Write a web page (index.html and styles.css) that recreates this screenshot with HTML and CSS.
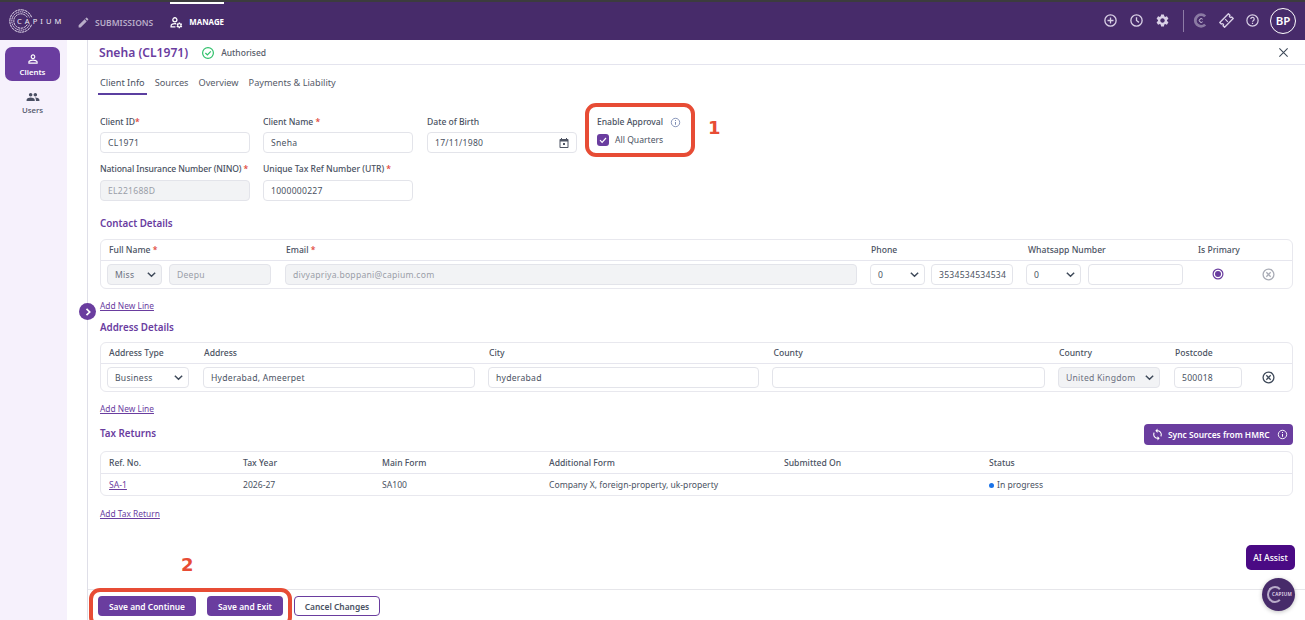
FILE: index.html
```html
<!DOCTYPE html>
<html lang="en">
<head>
<meta charset="utf-8">
<title>Client Info</title>
<link rel="stylesheet" href="styles.css">
</head>
<body>
<svg class="sprite" xmlns="http://www.w3.org/2000/svg">
  <symbol id="i-chev" viewBox="0 0 12 12"><path d="M2 4l4 4 4-4" fill="none" stroke="currentColor" stroke-width="1.6"/></symbol>
  <symbol id="i-info" viewBox="0 0 12 12"><circle cx="6" cy="6" r="4.6" fill="none" stroke="currentColor" stroke-width="1"/><path d="M6 5.4v3M6 3.4v1" stroke="currentColor" stroke-width="1.1"/></symbol>
  <symbol id="i-x" viewBox="0 0 12 12"><circle cx="6" cy="6" r="5" fill="none" stroke="currentColor" stroke-width="1.2"/><path d="M4 4l4 4M8 4l-4 4" stroke="currentColor" stroke-width="1.2"/></symbol>
  <symbol id="i-person" viewBox="0 0 24 24"><path fill="currentColor" d="M12 5.9a2.1 2.1 0 1 1 0 4.2 2.1 2.1 0 0 1 0-4.2m0 9c2.97 0 6.1 1.46 6.1 2.1v1.1H5.9V17c0-.64 3.13-2.1 6.1-2.1M12 4C9.79 4 8 5.79 8 8s1.79 4 4 4 4-1.79 4-4-1.79-4-4-4zm0 9c-2.67 0-8 1.34-8 4v3h16v-3c0-2.66-5.33-4-8-4z"/></symbol>
  <symbol id="i-gear" viewBox="0 0 24 24"><path fill="currentColor" d="M19.14 12.94c.04-.3.06-.61.06-.94 0-.32-.02-.64-.07-.94l2.03-1.58a.49.49 0 0 0 .12-.61l-1.92-3.32a.488.488 0 0 0-.59-.22l-2.39.96c-.5-.38-1.03-.7-1.62-.94l-.36-2.54a.484.484 0 0 0-.48-.41h-3.84c-.24 0-.43.17-.47.41l-.36 2.54c-.59.24-1.13.57-1.62.94l-2.39-.96c-.22-.08-.47 0-.59.22L2.74 8.87c-.12.21-.08.47.12.61l2.03 1.58c-.05.3-.09.63-.09.94s.02.64.07.94l-2.03 1.58a.49.49 0 0 0-.12.61l1.92 3.32c.12.22.37.29.59.22l2.39-.96c.5.38 1.03.7 1.62.94l.36 2.54c.05.24.24.41.48.41h3.84c.24 0 .44-.17.47-.41l.36-2.54c.59-.24 1.13-.56 1.62-.94l2.39.96c.22.08.47 0 .59-.22l1.92-3.32c.12-.22.07-.47-.12-.61l-2.01-1.58zM12 15.6c-1.98 0-3.6-1.62-3.6-3.6s1.62-3.6 3.6-3.6 3.6 1.62 3.6 3.6-1.62 3.6-3.6 3.6z"/></symbol>
</svg>

<header class="topbar">
  <div class="brand">
    <svg class="brand-mark" viewBox="0 0 24 24"><g fill="none" stroke="#e4dcee"><circle cx="12" cy="12" r="11.2" stroke-width="1" stroke-dasharray="3 .5"/><circle cx="12" cy="12" r="9.2" stroke-width="1" stroke-dasharray="1.6 .6"/><circle cx="12" cy="12" r="7.2" stroke-width="1" stroke-dasharray="2.4 .6"/></g><rect x="6" y="8.5" width="18" height="7" fill="#472b6a"/></svg>
    <span class="brand-name">CAPIUM</span>
  </div>
  <nav class="topnav">
    <a class="topnav-item">
      <svg class="topnav-icon" viewBox="0 0 24 24"><path fill="currentColor" d="M3 17.25V21h3.75L17.81 9.94l-3.75-3.75L3 17.25zM20.71 7.04a1 1 0 0 0 0-1.41l-2.34-2.34a1 1 0 0 0-1.41 0l-1.83 1.83 3.75 3.75 1.83-1.83z"/></svg>
      SUBMISSIONS
    </a>
    <a class="topnav-item is-active">
      <svg class="topnav-icon" viewBox="0 0 24 24"><circle cx="9" cy="7" r="3.8" fill="none" stroke="currentColor" stroke-width="2.4"/><path d="M2 21v-2.5c0-3 4-4.5 7-4.5.8 0 1.6.1 2.4.3M2 20.2h8" fill="none" stroke="currentColor" stroke-width="2.4"/><use href="#i-gear" x="10.5" y="10.5" width="13.5" height="13.5"/></svg>
      MANAGE
    </a>
  </nav>
  <div class="top-actions">
    <svg class="top-icon" viewBox="0 0 16 16"><circle cx="8" cy="8" r="6" fill="none" stroke="currentColor" stroke-width="1.4"/><path d="M8 4.8v6.4M4.8 8h6.4" stroke="currentColor" stroke-width="1.4"/></svg>
    <svg class="top-icon" viewBox="0 0 16 16"><circle cx="8" cy="8" r="6" fill="none" stroke="currentColor" stroke-width="1.4"/><path d="M8 4.4V8l2.6 2" fill="none" stroke="currentColor" stroke-width="1.4"/></svg>
    <svg class="top-icon" viewBox="0 0 24 24"><use href="#i-gear"/></svg>
    <span class="top-divider"></span>
    <svg class="top-icon top-icon-dim" viewBox="0 0 16 16"><path d="M13 3.6A6.2 6.2 0 1 0 13 12.4" fill="none" stroke="currentColor" stroke-width="3"/><path d="M10.2 6.6a2 2 0 1 0 0 2.8" fill="none" stroke="#d9d0e6" stroke-width="1"/></svg>
    <svg class="top-icon" viewBox="0 0 16 16"><g transform="rotate(-45 8 8)"><path d="M1.5 4.4h13v2.3a1.3 1.3 0 0 0 0 2.6v2.3h-13V9.3a1.3 1.3 0 0 0 0-2.6z" fill="none" stroke="currentColor" stroke-width="1.5" stroke-linejoin="round"/><path d="M8 6v4" stroke="currentColor" stroke-width="1.3"/></g></svg>
    <svg class="top-icon" viewBox="0 0 16 16"><circle cx="8" cy="8" r="6" fill="none" stroke="currentColor" stroke-width="1.3"/><path d="M6.2 6.4a1.8 1.8 0 1 1 2.8 1.5c-.6.4-1 .8-1 1.5M8 10.4v1.4" fill="none" stroke="currentColor" stroke-width="1.3"/></svg>
    <span class="avatar">BP</span>
  </div>
</header>

<div class="shell">
  <aside class="sidebar">
    <a class="side-item is-active">
      <svg class="side-icon" viewBox="0 0 24 24"><use href="#i-person"/></svg>
      Clients
    </a>
    <a class="side-item">
      <svg class="side-icon" viewBox="0 0 24 24"><path fill="currentColor" d="M16 11c1.66 0 2.99-1.34 2.99-3S17.66 5 16 5c-1.66 0-3 1.34-3 3s1.34 3 3 3zm-8 0c1.66 0 2.99-1.34 2.99-3S9.66 5 8 5C6.34 5 5 6.34 5 8s1.34 3 3 3zm0 2c-2.33 0-7 1.17-7 3.5V19h14v-2.5c0-2.33-4.67-3.5-7-3.5zm8 0c-.29 0-.62.02-.97.05 1.16.84 1.97 1.97 1.97 3.45V19h6v-2.5c0-2.33-4.67-3.5-7-3.5z"/></svg>
      Users
    </a>
  </aside>

  <main class="main">
    <div class="main-head">
      <h1 class="client-title">Sneha (CL1971)</h1>
      <svg class="status-icon" viewBox="0 0 14 14"><circle cx="7" cy="7" r="5.4" fill="none" stroke="#2fc06a" stroke-width="1.2"/><path d="M4.4 7l2 2 3.4-3.6" fill="none" stroke="#2fc06a" stroke-width="1.2"/></svg>
      <span class="status-text">Authorised</span>
      <svg class="close-icon" viewBox="0 0 12 12"><path d="M1.5 1.5l9 9M10.5 1.5l-9 9" stroke="currentColor" stroke-width="1.2"/></svg>
    </div>

    <div class="content">
      <div class="tabs">
        <a class="tab is-active">Client Info</a>
        <a class="tab">Sources</a>
        <a class="tab">Overview</a>
        <a class="tab">Payments &amp; Liability</a>
      </div>

      <div class="form-grid">
        <div class="field">
          <label class="label">Client ID<span class="req">*</span></label>
          <div class="input">CL1971</div>
        </div>
        <div class="field field-inset">
          <label class="label">Client Name <span class="req">*</span></label>
          <div class="input">Sneha</div>
        </div>
        <div class="field">
          <label class="label">Date of Birth</label>
          <div class="input input-split">17/11/1980
            <svg class="cal-icon" viewBox="0 0 24 24"><path fill="currentColor" d="M19 4h-1V2h-2v2H8V2H6v2H5c-1.1 0-2 .9-2 2v14c0 1.1.9 2 2 2h14c1.1 0 2-.9 2-2V6c0-1.1-.9-2-2-2zm0 16H5V9h14v11zM10 12h4v4h-4z"/></svg>
          </div>
        </div>
        <div class="approval">
          <div class="label approval-label">Enable Approval
            <svg class="approval-info" viewBox="0 0 12 12"><use href="#i-info"/></svg>
          </div>
          <div class="check-row">
            <svg class="checkbox" viewBox="0 0 12 12"><rect width="12" height="12" rx="3" fill="#6a3d9f"/><path d="M3 6.2l2.1 2.1L9 4" fill="none" stroke="#fff" stroke-width="1.2"/></svg>
            <span class="check-text">All Quarters</span>
          </div>
        </div>
        <div class="field">
          <label class="label label-up label-tight">National Insurance Number (NINO) <span class="req">*</span></label>
          <div class="input is-disabled">EL221688D</div>
        </div>
        <div class="field field-inset">
          <label class="label label-up">Unique Tax Ref Number (UTR) <span class="req">*</span></label>
          <div class="input">1000000227</div>
        </div>
      </div>

      <h2 class="section-title contact-title">Contact Details</h2>
      <div class="table">
        <div class="t-head contact-cols">
          <span>Full Name <span class="req">*</span></span>
          <span>Email <span class="req">*</span></span>
          <span>Phone</span>
          <span>Whatsapp Number</span>
          <span>Is Primary</span>
        </div>
        <div class="t-row contact-cols">
          <div class="pair name-pair">
            <div class="input select is-disabled">Miss<svg class="chev" viewBox="0 0 12 12"><use href="#i-chev"/></svg></div>
            <div class="input is-disabled">Deepu</div>
          </div>
          <div class="input is-disabled email-input">divyapriya.boppani@capium.com</div>
          <div class="pair phone-pair">
            <div class="input select">0<svg class="chev" viewBox="0 0 12 12"><use href="#i-chev"/></svg></div>
            <div class="input">3534534534534</div>
          </div>
          <div class="pair whatsapp-pair">
            <div class="input select">0<svg class="chev" viewBox="0 0 12 12"><use href="#i-chev"/></svg></div>
            <div class="input"></div>
          </div>
          <div class="primary-cell">
            <svg class="radio" viewBox="0 0 12 12"><circle cx="6" cy="6" r="4.9" fill="none" stroke="#6a3d9f" stroke-width="1.2"/><circle cx="6" cy="6" r="3" fill="#6a3d9f"/></svg>
            <svg class="remove is-muted" viewBox="0 0 12 12"><use href="#i-x"/></svg>
          </div>
        </div>
      </div>
      <a class="add-link">Add New Line</a>

      <h2 class="section-title address-title">Address Details</h2>
      <div class="table">
        <div class="t-head address-cols">
          <span>Address Type</span><span>Address</span><span>City</span><span>County</span><span>Country</span><span>Postcode</span>
        </div>
        <div class="t-row address-cols">
          <div class="input select addr-type">Business<svg class="chev" viewBox="0 0 12 12"><use href="#i-chev"/></svg></div>
          <div class="input addr-line">Hyderabad, Ameerpet</div>
          <div class="input addr-city">hyderabad</div>
          <div class="input addr-county"></div>
          <div class="input select is-disabled addr-country">United Kingdom<svg class="chev" viewBox="0 0 12 12"><use href="#i-chev"/></svg></div>
          <div class="postcode-cell">
            <div class="input postcode">500018</div>
            <svg class="remove" viewBox="0 0 12 12"><use href="#i-x"/></svg>
          </div>
        </div>
      </div>
      <a class="add-link">Add New Line</a>

      <div class="tax-head">
        <h2 class="section-title tax-title">Tax Returns</h2>
        <button class="sync-btn">
          <svg class="sync-icon" viewBox="0 0 24 24"><path fill="currentColor" d="M12 4V1L8 5l4 4V6c3.31 0 6 2.69 6 6 0 1.01-.25 1.97-.7 2.8l1.46 1.46A7.93 7.93 0 0 0 20 12c0-4.42-3.58-8-8-8zm0 14c-3.31 0-6-2.69-6-6 0-1.01.25-1.97.7-2.8L5.24 7.74A7.93 7.93 0 0 0 4 12c0 4.42 3.58 8 8 8v3l4-4-4-4v3z"/></svg>
          Sync Sources from HMRC
          <svg class="sync-info" viewBox="0 0 12 12"><use href="#i-info"/></svg>
        </button>
      </div>
      <div class="table tax-table">
        <div class="t-head tax-cols">
          <span>Ref. No.</span><span>Tax Year</span><span>Main Form</span><span>Additional Form</span><span>Submitted On</span><span>Status</span>
        </div>
        <div class="t-row tax-cols tax-row">
          <a class="ref-link">SA-1</a><span>2026-27</span><span>SA100</span><span>Company X, foreign-property, uk-property</span><span></span>
          <span class="status-cell"><span class="dot"></span>In progress</span>
        </div>
      </div>
      <a class="add-link add-tax">Add Tax Return</a>
    </div>

    <footer class="footer">
      <button class="btn btn-primary btn-continue">Save and Continue</button>
      <button class="btn btn-primary btn-exit">Save and Exit</button>
      <button class="btn btn-outline">Cancel Changes</button>
    </footer>

    <span class="toggle"><svg viewBox="0 0 12 12"><path d="M4.5 2.8L7.7 6 4.5 9.2" fill="none" stroke="#fff" stroke-width="1.7"/></svg></span>
  </main>
</div>

<button class="ai-btn">AI Assist</button>
<div class="help-fab"><span class="fab-c"></span><span class="fab-text">CAPIUM</span></div>

<div class="callout callout-one"></div>
<div class="callout callout-two"></div>
<span class="callout-num num-one">1</span>
<span class="callout-num num-two">2</span>
</body>
</html>
```
FILE: styles.css
```css
* { box-sizing: border-box; }
html, body { margin: 0; height: 620px; overflow: hidden; }
body {
  position: relative;
  display: flex;
  flex-direction: column;
  font-family: "Noto Sans", "Open Sans", sans-serif;
  font-size: 9px;
  color: #4a5262;
  background: #fff;
}
.sprite { display: none; }
h1, h2 { margin: 0; }
a { cursor: pointer; }

/* Top bar */
.topbar {
  flex: 0 0 40px;
  display: flex;
  align-items: center;
  background: #472b6a;
  border-top: 2px solid #3c3c3e;
  color: #fff;
}
.brand { position: relative; width: 77px; height: 26px; flex: none; }
.brand-mark { position: absolute; left: 9px; top: 1px; width: 24px; height: 24px; }
.brand-name { position: absolute; left: 17px; top: 7px; font-size: 7.5px; letter-spacing: 3.1px; color: #f0ebf6; line-height: 12px; }
.topnav { display: flex; gap: 17px; align-self: stretch; }
.topnav-item {
  display: flex; align-items: center; gap: 5px;
  font-weight: 600; font-size: 8.5px; color: #b9adc9;
  border-top: 2px solid transparent;
}
.topnav-item.is-active { color: #fff; border-top-color: #fff; font-size: 7.9px; font-weight: 700; gap: 6px; }
.topnav-icon { width: 13px; height: 13px; }
.top-actions { margin-left: auto; display: flex; align-items: center; gap: 11px; padding-right: 9px; margin-top: -1px; color: #d9d0e6; }
.top-icon { width: 15px; height: 15px; }
.top-icon-dim { color: #8b7aa3; }
.top-divider { width: 1px; height: 22px; background: #8d7ca6; margin: 0 -1.5px 0 1.5px; }
.avatar {
  width: 26px; height: 26px; border-radius: 50%;
  border: 1px solid #fff; color: #fff;
  display: flex; align-items: center; justify-content: center;
  font-size: 11.5px; font-weight: 600; margin-left: -1px;
}

/* Shell */
.shell { flex: 1; display: flex; min-height: 0; }
.sidebar {
  flex: 0 0 67px;
  background: #f6f1fc;
  padding: 7px 7px 0 5px;
  display: flex; flex-direction: column; gap: 5px;
  margin-right: 20px;
}
.side-item {
  height: 34px; border-radius: 7px;
  display: flex; flex-direction: column; align-items: center; justify-content: center;
  font-size: 7.8px; font-weight: 500; line-height: 11px; color: #4a4f63;
}
.side-item.is-active { background: #6a3d9f; color: #fff; font-weight: 600; padding-top: 1px; }
.side-icon { width: 14px; height: 14px; margin-bottom: 1px; }

.main { position: relative; flex: 1; min-width: 0; display: flex; flex-direction: column; border-left: 1px solid #dfdfe8; }
.main-head {
  flex: 0 0 25px;
  display: flex; align-items: center;
  padding: 1px 16px 0 11px;
  border-bottom: 1px solid #e4e4ee;
}
.client-title { font-size: 12.1px; font-weight: 600; color: #6a3d9f; }
.status-icon { width: 14px; height: 14px; margin-left: 13px; }
.status-text { margin-left: 6px; font-size: 8.5px; font-weight: 500; color: #555a68; }
.close-icon { margin-left: auto; width: 11px; height: 11px; color: #3f4a5a; }

.content { flex: 1; min-height: 0; padding: 11px 12px 0; }
.tabs { display: flex; gap: 6px; height: 19px; margin-left: -2px; }
.tab { padding: 0 2px; line-height: 14px; font-size: 9.2px; color: #555a68; border-bottom: 2px solid transparent; }
.tab.is-active { border-bottom-color: #5b3fa0; color: #4a5262; }

.form-grid {
  margin-top: 20px;
  display: grid;
  grid-template-columns: 150px 151px 150px 130px;
  column-gap: 13px;
  row-gap: 10px;
}
.field { min-width: 0; }
.field-inset { padding-right: 1px; }
.label { display: block; padding-top: 1px; line-height: 12px; font-size: 8.6px; font-weight: 500; letter-spacing: -.03px; color: #4a5262; margin-bottom: 4px; white-space: nowrap; }
.label-up { padding-top: 0; margin-bottom: 5px; }
.label-tight { letter-spacing: -.12px; }
.req { color: #e03c31; }
.input {
  height: 21px; min-width: 0;
  display: flex; align-items: center;
  padding: 0 7px;
  background: #fff;
  border: 1px solid #e3e4ea;
  border-radius: 4px;
  font-size: 8.6px; letter-spacing: .25px; color: #4a5262;
  white-space: nowrap; overflow: hidden;
}
.input.is-disabled { background: #f2f3f5; color: #9a9ea8; }
.input.select { justify-content: space-between; padding-right: 4px; }
.input.is-disabled.select { color: #6b7080; }
.input-split { justify-content: space-between; padding-right: 6px; }
.cal-icon { width: 12px; height: 12px; color: #4f5564; }
.chev { width: 11px; height: 11px; color: #3f4a5a; flex: none; }

.approval { margin-left: 7px; }
.approval-label { display: flex; align-items: center; gap: 7px; margin-bottom: 5px; }
.approval-info { width: 11px; height: 11px; color: #7f8db5; }
.check-row { display: flex; align-items: center; gap: 6px; font-size: 8.6px; line-height: 12px; color: #4a5262; }
.check-text { padding-top: 1px; }
.checkbox { width: 12px; height: 12px; }

.section-title { font-size: 9.8px; font-weight: 600; line-height: 14px; color: #6a3d9f; }
.contact-title { margin-top: 16px; margin-bottom: 8px; }
.address-title { margin-top: 9px; margin-bottom: 7px; }
.tax-title { margin-bottom: 2px; }

.table { border: 1px solid #e8e8ee; border-radius: 6px; height: 50px; }
.t-head { height: 21px; display: grid; align-items: center; border-bottom: 1px solid #e6e6ee; font-size: 8.6px; font-weight: 500; color: #4a5262; }
.t-row { height: 27px; display: grid; align-items: center; }
.contact-cols { grid-template-columns: 178px 585px 156px 172px 1fr; padding-left: 6px; padding-right: 10px; }
.t-head.contact-cols { padding-left: 8px; grid-template-columns: 177px 585px 157px 170px 1fr; }
.pair { display: flex; gap: 7px; }
.name-pair { width: 164px; }
.name-pair .select { flex: 0 0 55px; }
.name-pair .input:last-child { flex: 1; }
.phone-pair { width: 143px; gap: 6px; }
.phone-pair .select { flex: 0 0 55px; }
.phone-pair .input:last-child { flex: 1; padding-right: 2px; }
.whatsapp-pair { width: 157px; }
.whatsapp-pair .select { flex: 0 0 55px; }
.whatsapp-pair .input:last-child { flex: 1; }
.email-input { width: 572px; }
.primary-cell { display: flex; align-items: center; padding-left: 14px; gap: 38px; }
.radio { width: 12px; height: 12px; margin-top: -2px; }
.remove { width: 13px; height: 13px; color: #3f4a5a; flex: none; }
.remove.is-muted { color: #a9acb6; }

.address-cols { grid-template-columns: 96px 285px 284px 286px 116px 1fr; padding-left: 6px; }
.t-head.address-cols { padding-left: 8px; grid-template-columns: 95px 285px 284.5px 285.5px 116px 1fr; }
.addr-type { width: 82px; }
.addr-line { width: 272px; }
.addr-city { width: 271px; }
.addr-county { width: 273px; }
.addr-country { width: 102px; }
.postcode-cell { display: flex; align-items: center; gap: 20px; }
.postcode { width: 68px; flex: none; }

.add-link { display: block; margin-top: 11px; line-height: 12px; font-size: 8.4px; color: #6a3d9f; text-decoration: underline; }
.add-link.add-tax { margin-top: 12px; }
.tax-head { margin-top: 9px; height: 21px; display: flex; align-items: center; justify-content: space-between; }
.sync-btn {
  height: 21px; width: 149px; padding: 0 5px 0 7px;
  display: flex; align-items: center; gap: 4px;
  background: #6a3d9f; color: #fff;
  border: 0; border-radius: 4px;
  font: 600 8.4px "Noto Sans", sans-serif; white-space: nowrap;
}
.sync-icon { width: 13px; height: 13px; flex: none; }
.sync-info { width: 11px; height: 11px; flex: none; margin-left: auto; }
.tax-table { margin-top: 6px; height: 45px; }
.tax-table .t-head { height: 22px; padding-top: 1px; }
.tax-cols { grid-template-columns: 134px 139px 167px 235px 205px 1fr; padding-left: 8px; }
.tax-row { height: 22px; font-size: 8.6px; color: #4a5262; }
.ref-link { color: #6a3d9f; text-decoration: underline; }
.status-cell { display: flex; align-items: center; gap: 3px; }
.dot { width: 5px; height: 5px; border-radius: 50%; background: #1a73e8; }

.footer {
  flex: 0 0 31px;
  display: flex; align-items: flex-start; gap: 11px;
  padding: 6px 0 0 10px;
  border-top: 1px solid #e6e6ea;
}
.btn { height: 20px; border-radius: 4px; font: 600 8.4px "Noto Sans", sans-serif; padding: 0; white-space: nowrap; }
.btn-primary { background: #6a3d9f; border: 0; color: #fff; }
.btn-continue { width: 98px; }
.btn-exit { width: 76px; }
.btn-outline { width: 86px; background: #fff; border: 1px solid #6a3d9f; color: #4a5262; }

.toggle {
  position: absolute; left: -9px; top: 263px;
  width: 17px; height: 17px; border-radius: 50%;
  background: #6a3d9f;
  display: flex; align-items: center; justify-content: center;
}
.toggle svg { width: 12px; height: 12px; }

.ai-btn {
  position: absolute; left: 1246px; top: 545px;
  width: 49px; height: 25px;
  background: #4a0a84; color: #fff; border: 0; border-radius: 5px;
  font: 500 8.6px "Noto Sans", sans-serif; padding: 0;
}
.help-fab {
  position: absolute; left: 1262px; top: 578px;
  width: 33px; height: 33px; border-radius: 50%;
  background: #472b6a;
  box-shadow: 0 1px 4px rgba(0,0,0,.25);
  overflow: hidden;
}
.fab-c { position: absolute; left: 5px; top: 8px; width: 16px; height: 17px; border: 2.5px solid #b8acc9; border-right-color: transparent; border-radius: 50%; }
.fab-text { position: absolute; left: 10px; top: 12px; font-size: 4.6px; line-height: 8px; letter-spacing: .3px; color: #e6dff0; font-weight: 600; }

.callout { position: absolute; border: 4px solid #e74c35; border-radius: 11px; pointer-events: none; }
.callout-one { left: 585px; top: 103px; width: 110px; height: 54px; }
.callout-two { left: 89px; top: 588px; width: 203px; height: 40px; }
.callout-num { position: absolute; font-family: "DejaVu Sans", sans-serif; font-size: 18px; line-height: 24px; font-weight: 700; color: #e74c35; }
.num-one { left: 708px; top: 116px; }
.num-two { left: 181px; top: 553px; }
```
